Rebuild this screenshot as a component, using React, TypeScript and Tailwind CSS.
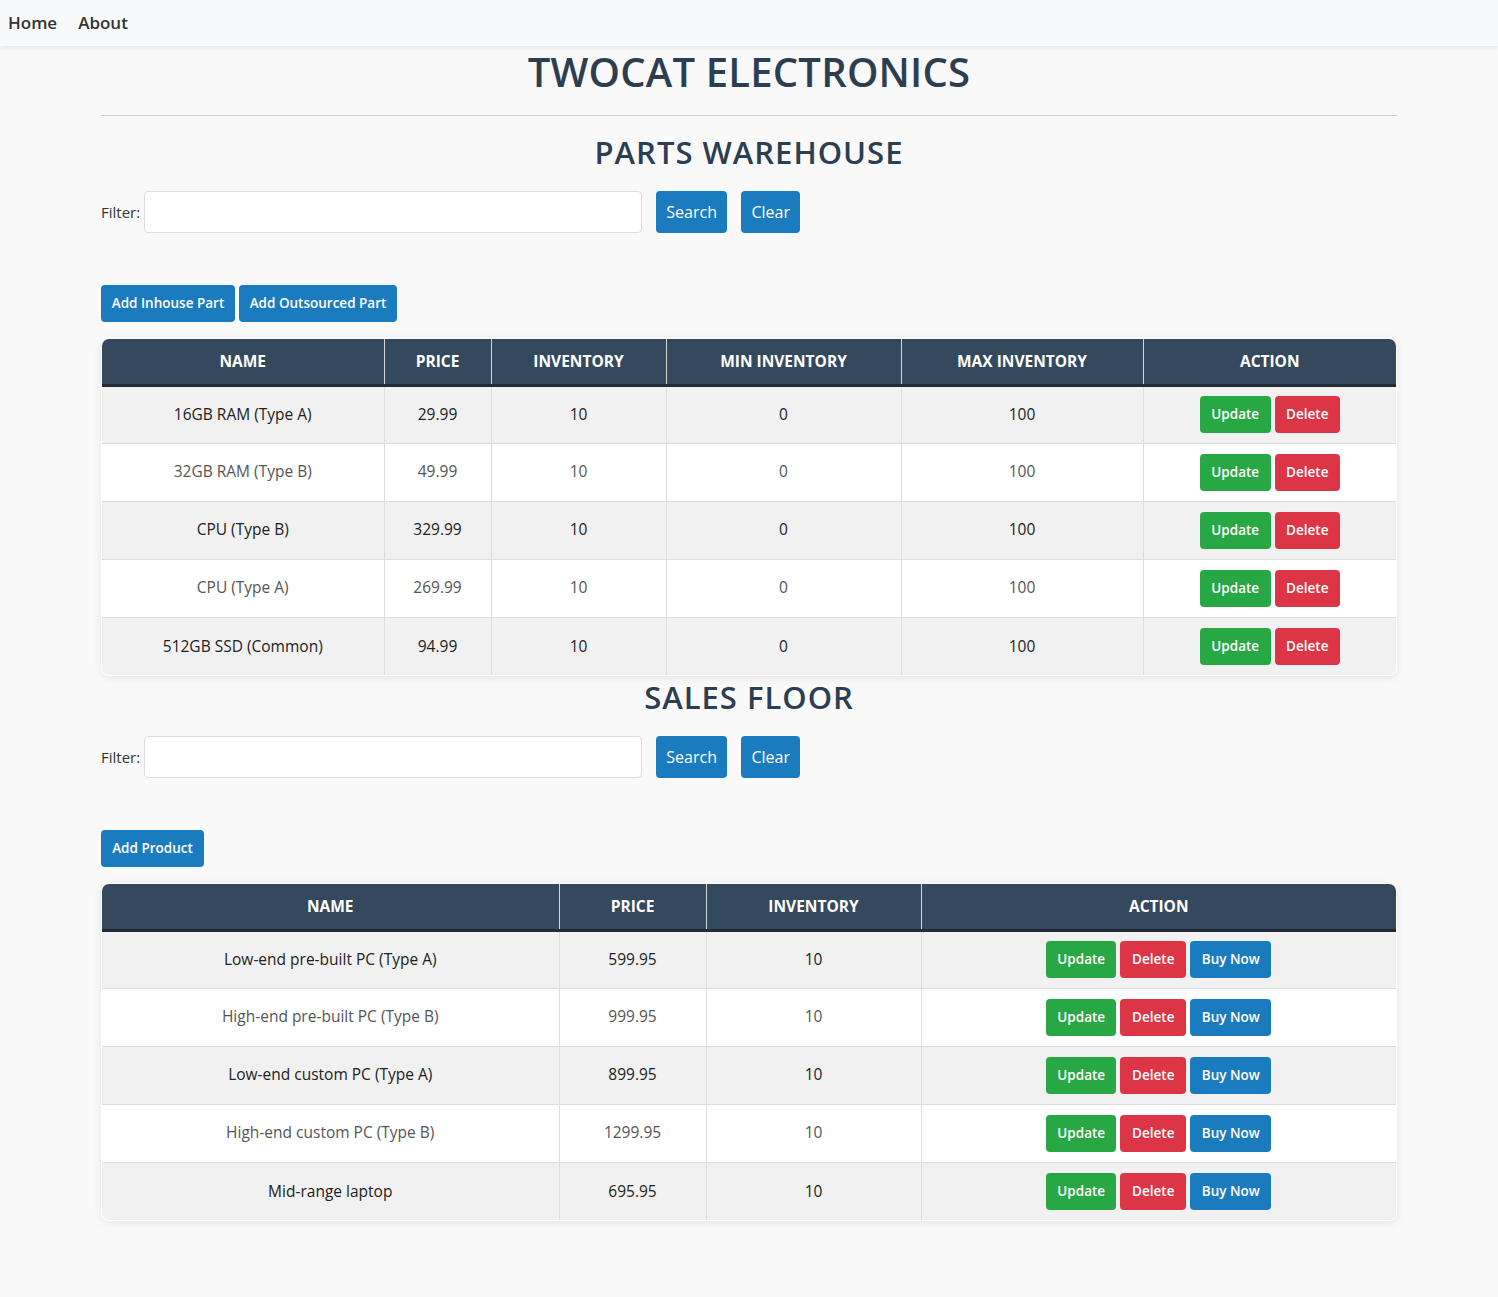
import React from "react";

type Part = { name: string; price: string; inv: number; min: number; max: number };
type Product = { name: string; price: string; inv: number };

const parts: Part[] = [
  { name: "16GB RAM (Type A)", price: "29.99", inv: 10, min: 0, max: 100 },
  { name: "32GB RAM (Type B)", price: "49.99", inv: 10, min: 0, max: 100 },
  { name: "CPU (Type B)", price: "329.99", inv: 10, min: 0, max: 100 },
  { name: "CPU (Type A)", price: "269.99", inv: 10, min: 0, max: 100 },
  { name: "512GB SSD (Common)", price: "94.99", inv: 10, min: 0, max: 100 },
];

const products: Product[] = [
  { name: "Low-end pre-built PC (Type A)", price: "599.95", inv: 10 },
  { name: "High-end pre-built PC (Type B)", price: "999.95", inv: 10 },
  { name: "Low-end custom PC (Type A)", price: "899.95", inv: 10 },
  { name: "High-end custom PC (Type B)", price: "1299.95", inv: 10 },
  { name: "Mid-range laptop", price: "695.95", inv: 10 },
];

function FilterRow() {
  return (
    <div className="flex items-center mt-[19px]">
      <label className="text-[15px] text-[#333] mr-[4px]">Filter:</label>
      <input className="w-[498px] h-[42px] bg-white border border-[#dcdcdc] rounded-[4px] px-2 outline-none" />
      <button className="ml-[14px] h-[42px] w-[71px] rounded-[4px] bg-[#1b7bbf] text-white text-[16px]">Search</button>
      <button className="ml-[14px] h-[42px] w-[59px] rounded-[4px] bg-[#1b7bbf] text-white text-[16px]">Clear</button>
    </div>
  );
}

function SmallBtn({ color, children, w }: { color: "green" | "red" | "blue"; children: React.ReactNode; w: string }) {
  const bg = color === "green" ? "bg-[#28a745]" : color === "red" ? "bg-[#dc3545]" : "bg-[#1b7bbf]";
  return (
    <button className={`${bg} ${w} h-[37px] rounded-[4px] text-white text-[13.5px] font-semibold`}>{children}</button>
  );
}

function Th({ children, w, last }: { children: React.ReactNode; w?: string; last?: boolean }) {
  return (
    <th className={`${w ?? ""} h-[46px] pt-[1px] text-[15.5px] font-bold text-white uppercase ${last ? "" : "border-r border-[#d0d6dc]"}`}>
      {children}
    </th>
  );
}

function Td({ children, last }: { children: React.ReactNode; last?: boolean }) {
  return (
    <td className={`h-[58px] text-center text-[15.5px] ${last ? "" : "border-r border-[#dddddd]"}`}>{children}</td>
  );
}

export default function App() {
  return (
    <div className="min-h-[1297px] bg-[#f9f9f9] font-['Open_Sans','Noto_Sans',sans-serif] text-[#212529]">
      <nav className="h-[46px] bg-[#f8f9fa] shadow-[0_2px_4px_rgba(0,0,0,0.08)] flex items-center pl-[8px] gap-[21px] text-[17px] font-semibold text-[#333]">
        <span>Home</span>
        <span>About</span>
      </nav>

      <div className="w-[1296px] mx-auto">
        <h1 className="mt-[2px] text-center text-[40px] leading-[48px] font-semibold tracking-[0.2px] text-[#2c3e50]">
          TWOCAT ELECTRONICS
        </h1>
        <hr className="mt-[19px] border-t border-[#cccccc]" />
        <h2 className="mt-[16px] text-center text-[31px] leading-[40px] font-semibold tracking-[1px] text-[#2c3e50]">
          PARTS WAREHOUSE
        </h2>
        <FilterRow />

        <div className="mt-[52px] flex gap-[4px]">
          <SmallBtn color="blue" w="w-[134px]">Add Inhouse Part</SmallBtn>
          <SmallBtn color="blue" w="w-[158px]">Add Outsourced Part</SmallBtn>
        </div>

        <div className="mt-[16px] rounded-[8px] overflow-hidden border border-white shadow-[0_2px_8px_rgba(0,0,0,0.08)]">
          <table className="w-full border-collapse table-fixed">
            <thead>
              <tr className="bg-[#34495e] border-b-[3px] border-[#222c36]">
                <Th w="w-[282px]">Name</Th>
                <Th w="w-[107px]">Price</Th>
                <Th w="w-[175px]">Inventory</Th>
                <Th w="w-[235px]">Min Inventory</Th>
                <Th w="w-[242px]">Max Inventory</Th>
                <Th last>Action</Th>
              </tr>
            </thead>
            <tbody>
              {parts.map((p, i) => (
                <tr
                  key={p.name}
                  className={`${i % 2 === 0 ? "bg-[#f1f1f1] text-[#222]" : "bg-white text-[#555]"} ${i < parts.length - 1 ? "border-b border-[#dddddd]" : ""}`}
                >
                  <Td>{p.name}</Td>
                  <Td>{p.price}</Td>
                  <Td>{p.inv}</Td>
                  <Td>{p.min}</Td>
                  <Td>{p.max}</Td>
                  <Td last>
                    <div className="flex justify-center gap-[4px]">
                      <SmallBtn color="green" w="w-[71px]">Update</SmallBtn>
                      <SmallBtn color="red" w="w-[65px]">Delete</SmallBtn>
                    </div>
                  </Td>
                </tr>
              ))}
            </tbody>
          </table>
        </div>

        <h2 className="mt-[1px] text-center text-[31px] leading-[40px] font-semibold tracking-[1px] text-[#2c3e50]">
          SALES FLOOR
        </h2>
        <FilterRow />

        <div className="mt-[52px] flex">
          <SmallBtn color="blue" w="w-[103px]">Add Product</SmallBtn>
        </div>

        <div className="mt-[16px] rounded-[8px] overflow-hidden border border-white shadow-[0_2px_8px_rgba(0,0,0,0.08)]">
          <table className="w-full border-collapse table-fixed">
            <thead>
              <tr className="bg-[#34495e] border-b-[3px] border-[#222c36]">
                <Th w="w-[457px]">Name</Th>
                <Th w="w-[147px]">Price</Th>
                <Th w="w-[215px]">Inventory</Th>
                <Th last>Action</Th>
              </tr>
            </thead>
            <tbody>
              {products.map((p, i) => (
                <tr
                  key={p.name}
                  className={`${i % 2 === 0 ? "bg-[#f1f1f1] text-[#222]" : "bg-white text-[#555]"} ${i < products.length - 1 ? "border-b border-[#dddddd]" : ""}`}
                >
                  <Td>{p.name}</Td>
                  <Td>{p.price}</Td>
                  <Td>{p.inv}</Td>
                  <Td last>
                    <div className="flex justify-center gap-[4px]">
                      <SmallBtn color="green" w="w-[70px]">Update</SmallBtn>
                      <SmallBtn color="red" w="w-[66px]">Delete</SmallBtn>
                      <SmallBtn color="blue" w="w-[81px]">Buy Now</SmallBtn>
                    </div>
                  </Td>
                </tr>
              ))}
            </tbody>
          </table>
        </div>
      </div>
    </div>
  );
}
